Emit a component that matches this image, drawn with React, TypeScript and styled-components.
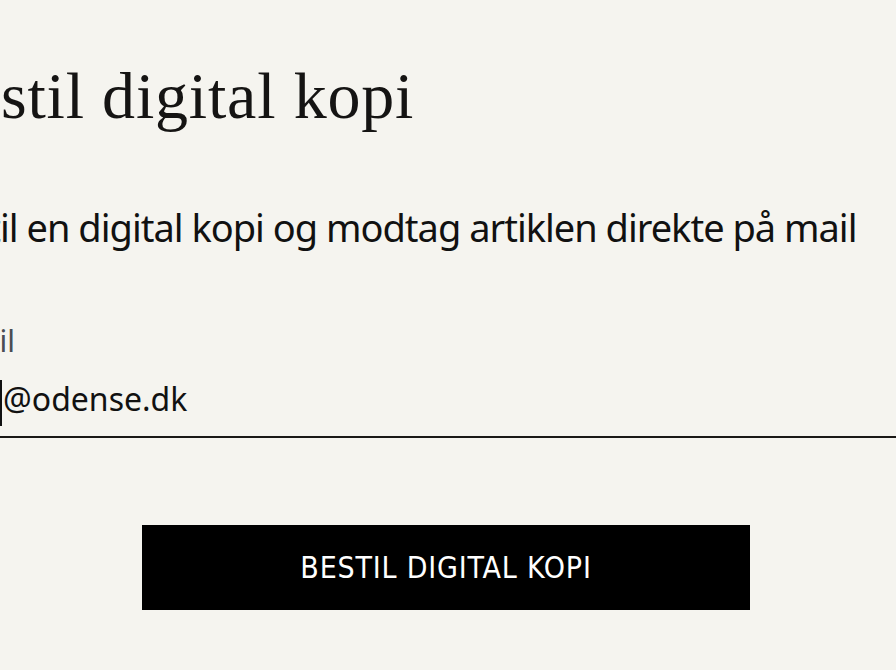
import React from "react";
import styled, { createGlobalStyle } from "styled-components";

const GlobalStyle = createGlobalStyle`
  html, body {
    margin: 0;
    padding: 0;
    background: #f5f4ef;
    overflow: hidden;
  }
`;

const Page = styled.div`
  width: 896px;
  height: 670px;
  overflow: hidden;
  background: #f5f4ef;
`;

const OrderForm = styled.form`
  width: 1040px;
  margin-left: -74px;
  padding-top: 58px;
  display: flex;
  flex-direction: column;
`;

const Title = styled.h1`
  margin: 0;
  font-family: "Liberation Serif", "DejaVu Serif", serif;
  font-weight: 400;
  font-size: 66px;
  line-height: 76px;
  letter-spacing: 0.8px;
  color: #151413;
`;

const Lead = styled.p`
  margin: 69px 0 0;
  font-family: "Noto Sans", "Open Sans", sans-serif;
  font-size: 38px;
  line-height: 48px;
  letter-spacing: -1px;
  color: #111;
`;

const Field = styled.label`
  margin-top: 72px;
  display: flex;
  flex-direction: column;
`;

const FieldLabel = styled.span`
  padding-left: 12px;
  font-family: "Noto Sans", "Open Sans", sans-serif;
  font-size: 30px;
  line-height: 36px;
  color: #4a4d54;
`;

const FieldInput = styled.div`
  margin-top: 18px;
  padding: 0 0 10px 74px;
  display: flex;
  align-items: flex-start;
  border-bottom: 2px solid #1a1816;
  font-family: "Noto Sans", "Open Sans", sans-serif;
  font-size: 32px;
  line-height: 44px;
  color: #111;
`;

const Caret = styled.span`
  flex: none;
  width: 2px;
  height: 46px;
  margin: 3px 1px 0 0;
  background: #111;
`;

const Submit = styled.button`
  align-self: center;
  margin-top: 87px;
  width: 608px;
  height: 85px;
  border: none;
  background: #000;
  color: #fff;
  font-family: "Liberation Sans Narrow", "DejaVu Sans Condensed", "Noto Sans", sans-serif;
  font-size: 30px;
  letter-spacing: 0.8px;
  text-transform: uppercase;
  cursor: pointer;
`;

export default function App() {
  return (
    <Page>
      <GlobalStyle />
      <OrderForm onSubmit={(e) => e.preventDefault()}>
        <Title>Bestil digital kopi</Title>
        <Lead>Bestil en digital kopi og modtag artiklen direkte på mail</Lead>
        <Field>
          <FieldLabel>Email</FieldLabel>
          <FieldInput>
            <Caret />
            @odense.dk
          </FieldInput>
        </Field>
        <Submit type="submit">Bestil digital kopi</Submit>
      </OrderForm>
    </Page>
  );
}
